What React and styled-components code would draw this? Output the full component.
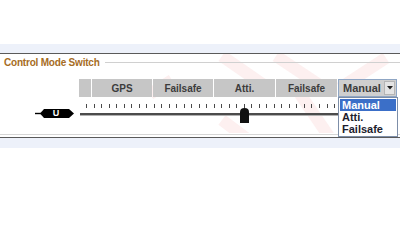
import React from 'react';
import styled, { createGlobalStyle } from 'styled-components';

const GlobalStyle = createGlobalStyle`
  body {
    margin: 0;
    background: #ffffff;
    font-family: "Liberation Sans", Arial, sans-serif;
  }
`;

const Page = styled.div`
  width: 400px;
  height: 200px;
  padding-top: 44px;
  box-sizing: border-box;
  overflow: hidden;
`;

const Strip = styled.div`
  height: ${(p) => p.h}px;
  background: #edf1fa;
`;

const Panel = styled.div`
  position: relative;
  height: 85px;
  background: #ffffff;
  border-top: 1px solid #5a5a5a;
  border-bottom: 1px solid #5a5a5a;
  box-sizing: border-box;
  overflow: visible;
`;

const Watermark = styled.svg`
  position: absolute;
  left: 0;
  top: 0;
  pointer-events: none;
`;

const Group = styled.div`
  position: relative;
  height: 81px;
  border-bottom: 1px solid #d6d6d6;
  box-sizing: border-box;
`;

const TitleRow = styled.div`
  display: flex;
  align-items: center;
  gap: 5px;
  padding: 1px 0 0 4px;
  height: 14px;
`;

const Title = styled.span`
  font-size: 10px;
  font-weight: bold;
  letter-spacing: -0.2px;
  color: #a66c24;
  white-space: nowrap;
`;

const TitleLine = styled.div`
  flex: 1;
  height: 1px;
  background: #d0d0d0;
`;

const Body = styled.div`
  display: grid;
  grid-template-columns: 79px 318px;
  margin-top: 10px;
`;

const BadgeCol = styled.div`
  display: flex;
  align-items: flex-end;
  justify-content: flex-end;
  padding-right: 4px;
  padding-bottom: 6px;
`;

const Badge = styled.div`
  position: relative;
  display: flex;
  align-items: center;
  justify-content: center;
  width: 40px;
  height: 11px;
  color: #ffffff;
  font-size: 9px;
  font-weight: bold;
`;

const BadgeShape = styled.svg`
  position: absolute;
  left: 0;
  top: 0;
`;

const BadgeLabel = styled.span`
  position: relative;
  line-height: 11px;
  margin-left: 2px;
`;

const Main = styled.div`
  display: flex;
  flex-direction: column;
`;

const HeaderRow = styled.div`
  display: flex;
  gap: 1px;
  height: 18px;
`;

const Cell = styled.div`
  width: ${(p) => p.w}px;
  background: #c6c6c6;
  display: flex;
  align-items: center;
  justify-content: center;
  font-size: 10px;
  font-weight: bold;
  color: #3c3c3c;
`;

const ComboWrap = styled.div`
  position: relative;
  width: 59px;
`;

const Combo = styled.div`
  height: 18px;
  box-sizing: border-box;
  border: 1px solid #8fa6c4;
  background: #cfcfcf;
  display: flex;
  align-items: center;
  justify-content: space-between;
  padding: 0 1px 0 4px;
  font-size: 11px;
  font-weight: bold;
  color: #3c3c3c;
`;

const ArrowBtn = styled.div`
  width: 11px;
  height: 14px;
  background: #e4e4e4;
  border: 1px solid #b5b5b5;
  box-sizing: border-box;
  display: flex;
  align-items: center;
  justify-content: center;
`;

const List = styled.div`
  position: absolute;
  top: 18px;
  left: 0;
  width: 60px;
  background: #ffffff;
  border: 1px solid #7d8ea8;
  box-sizing: border-box;
  padding: 1px;
  z-index: 2;
`;

const Item = styled.div`
  height: 12px;
  line-height: 12px;
  padding-left: 2px;
  font-size: 11px;
  font-weight: bold;
  color: ${(p) => (p.active ? '#ffffff' : '#1d1d2e')};
  background: ${(p) => (p.active ? '#3b6fc8' : 'transparent')};
`;

const SliderArea = styled.div`
  position: relative;
  height: 28px;
  display: flex;
  flex-direction: column;
`;

const Ticks = styled.div`
  display: flex;
  justify-content: space-between;
  margin: 7px 0 0 7px;
  width: 302px;
  height: 4px;
`;

const Tick = styled.div`
  width: 1px;
  height: 4px;
  background: #4a4a4a;
`;

const Track = styled.div`
  margin-top: 5px;
  margin-left: 1px;
  width: 315px;
  height: 2px;
  background: #4c4c4c;
  border-bottom: 1px solid #b0b0b0;
`;

const Thumb = styled.svg`
  position: absolute;
  top: 11px;
`;

const modes = [
  { label: '', w: 12 },
  { label: 'GPS', w: 60 },
  { label: 'Failsafe', w: 60 },
  { label: 'Atti.', w: 61 },
  { label: 'Failsafe', w: 61 },
];

const ticks = Array.from({ length: 41 });

export default function App() {
  const thumbLeft = 7 + 21 * 7.55 - 4.5;
  return (
    <Page>
      <GlobalStyle />
      <Strip h={9} />
      <Panel>
        <Watermark width="400" height="79" viewBox="0 0 400 79">
          <g stroke="#fdf0f0" strokeWidth="12" fill="none" strokeLinecap="butt">
            <path d="M222 2 L268 34" />
            <path d="M276 2 L318 30" />
            <path d="M386 4 L340 34" />
            <path d="M300 40 L330 84" />
            <path d="M222 66 L246 84" />
            <path d="M150 40 L172 26" />
          </g>
        </Watermark>
        <Group>
          <TitleRow>
            <Title>Control Mode Switch</Title>
            <TitleLine />
          </TitleRow>
          <Body>
            <BadgeCol>
              <Badge>
                <BadgeShape width="40" height="11" viewBox="0 0 40 11">
                  <path d="M0 5.5 L6 5.5" stroke="#000" strokeWidth="1.4" />
                  <path d="M5 5.5 L9 1 L34 1 L39 5.5 L34 10 L9 10 Z" fill="#000" />
                </BadgeShape>
                <BadgeLabel>U</BadgeLabel>
              </Badge>
            </BadgeCol>
            <Main>
              <HeaderRow>
                {modes.map((m, i) => (
                  <Cell key={i} w={m.w}>{m.label}</Cell>
                ))}
                <ComboWrap>
                  <Combo>
                    <span>Manual</span>
                    <ArrowBtn>
                      <svg width="6" height="4" viewBox="0 0 6 4">
                        <path d="M0 0 L6 0 L3 3.5 Z" fill="#222" />
                      </svg>
                    </ArrowBtn>
                  </Combo>
                  <List>
                    <Item active>Manual</Item>
                    <Item>Atti.</Item>
                    <Item>Failsafe</Item>
                  </List>
                </ComboWrap>
              </HeaderRow>
              <SliderArea>
                <Ticks>
                  {ticks.map((_, i) => (
                    <Tick key={i} />
                  ))}
                </Ticks>
                <Track />
                <Thumb width="9" height="15" viewBox="0 0 9 15" style={{ left: thumbLeft }}>
                  <path d="M0 4 Q0 0 4.5 0 Q9 0 9 4 L9 15 L0 15 Z" fill="#111" />
                </Thumb>
              </SliderArea>
            </Main>
          </Body>
        </Group>
      </Panel>
      <Strip h={10} />
    </Page>
  );
}
